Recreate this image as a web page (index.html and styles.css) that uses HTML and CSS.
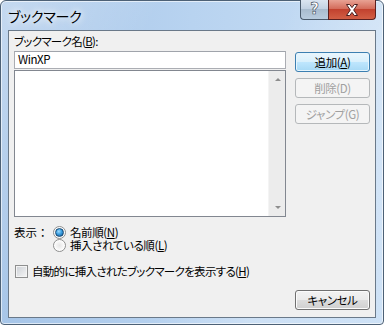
FILE: index.html
```html
<!DOCTYPE html>
<html lang="ja">
  <head>
    <meta charset="UTF-8" />
    <title>ブックマーク</title>
    <link rel="stylesheet" href="styles.css">
  </head>
  <body>
    <div class="window">
      <div class="titlebar">
        <span class="title">ブックマーク</span>
        <div class="caption-buttons">
          <div class="cap-btn help"><span>?</span></div>
          <div class="cap-btn close">
            <svg width="16" height="14" viewBox="0 0 16 14">
              <path d="M2.5 1.5h3.2L8 4.6l2.3-3.1h3.2L9.7 7l3.8 5.5h-3.2L8 9.4l-2.3 3.1H2.5L6.3 7z" fill="#fff" stroke="#4a1e1e" stroke-width="1" stroke-linejoin="round" />
            </svg>
          </div>
        </div>
      </div>
      <div class="client">
        <div class="top">
          <div class="left">
            <label class="label">ブックマーク名(<u>B</u>):</label>
            <div class="textbox">WinXP</div>
            <div class="listbox">
              <div class="scrollbar">
                <span class="arrow up"></span>
                <span class="arrow down"></span>
              </div>
            </div>
          </div>
          <div class="buttons">
            <button class="btn default">追加(<u>A</u>)</button>
            <button class="btn" disabled>削除(D)</button>
            <button class="btn" disabled>ジャンプ(G)</button>
          </div>
        </div>
        <div class="display">
          <span class="display-label">表示：</span>
          <div class="option"><span class="radio checked"></span><span>名前順(<u>N</u>)</span></div>
          <div class="option"><span class="radio"></span><span>挿入されている順(<u>L</u>)</span></div>
        </div>
        <div class="check-row"><span class="checkbox"></span><span>自動的に挿入されたブックマークを表示する(<u>H</u>)</span></div>
        <div class="footer">
          <button class="btn">キャンセル</button>
        </div>
      </div>
    </div>
  </body>
</html>
```

FILE: styles.css
```css
* {
  box-sizing: border-box;
}

body {
  margin: 0;
  width: 384px;
  height: 325px;
  overflow: hidden;
  font-family: "Noto Sans CJK JP", "Noto Sans", sans-serif;
  font-size: 11.5px;
  letter-spacing: -0.4px;
  font-feature-settings: "palt";
  color: #000;
}

.window {
  width: 384px;
  height: 325px;
  border: 1px solid #4d6176;
  border-radius: 6px 6px 4px 4px;
  padding: 0 7px 6px 7px;
  display: flex;
  flex-direction: column;
  background:
    linear-gradient(115deg, rgba(255, 255, 255, 0.35) 0%, rgba(255, 255, 255, 0) 30%, rgba(255, 255, 255, 0) 55%, rgba(255, 255, 255, 0.25) 75%, rgba(255, 255, 255, 0.1) 100%),
    linear-gradient(to right, #a6c5e8, #b8d3f0 50%, #c8def5);
  box-shadow: inset 0 0 0 1px rgba(255, 255, 255, 0.6);
}

.titlebar {
  height: 29px;
  display: flex;
  justify-content: space-between;
}

.title {
  align-self: center;
  padding-top: 1px;
  font-size: 14px;
  letter-spacing: -0.2px;
  text-shadow: 0 0 6px #fff, 0 0 10px #fff;
}

.caption-buttons {
  display: flex;
  height: 20px;
  margin-top: -1px;
}

.cap-btn {
  display: flex;
  align-items: center;
  justify-content: center;
  border: 1px solid #4a5a6c;
  border-top: none;
}

.help {
  width: 28px;
  border-radius: 0 0 0 4px;
  border-right: none;
  background: linear-gradient(#dbe5f1, #c3d2e3 45%, #a9bccf 50%, #b9ccdf);
}

.help span {
  font-family: "DejaVu Sans", sans-serif;
  font-weight: bold;
  font-size: 15px;
  line-height: 15px;
  letter-spacing: 0;
  color: #fff;
  -webkit-text-stroke: 0.6px #3a4654;
}

.close {
  width: 48px;
  border-radius: 0 0 4px 0;
  border-color: #5a2020;
  background: linear-gradient(#e8a294, #d46d5c 45%, #c2422f 50%, #d25f45);
}

.client {
  flex: 1;
  border: 1px solid #6a7989;
  background: #f0f0f0;
  display: flex;
  flex-direction: column;
  padding: 0 5px;
}

.top {
  display: flex;
  gap: 9px;
}

.left {
  width: 272px;
  display: flex;
  flex-direction: column;
}

.label {
  height: 16px;
  line-height: 16px;
  margin-top: 2px;
  margin-bottom: 2px;
  letter-spacing: -0.7px;
}

.textbox {
  height: 18px;
  border: 1px solid #abadb3;
  border-top-color: #a0a4ab;
  background: #fff;
  padding-left: 3px;
  line-height: 15px;
  margin-bottom: 1px;
}

.listbox {
  height: 147px;
  border: 1px solid #828790;
  background: #fff;
  display: flex;
  justify-content: flex-end;
}

.scrollbar {
  width: 17px;
  background: #ececec;
  border-left: 1px solid #f4f4f4;
  display: flex;
  flex-direction: column;
  justify-content: space-between;
  align-items: center;
  padding: 7px 0 7px 1px;
}

.arrow {
  width: 0;
  height: 0;
  border-left: 3px solid transparent;
  border-right: 3px solid transparent;
}

.arrow.up {
  border-bottom: 3px solid #8d8d8d;
}

.arrow.down {
  border-top: 3px solid #8d8d8d;
}

.buttons {
  width: 75px;
  padding-top: 21px;
  display: flex;
  flex-direction: column;
  gap: 6px;
}

.btn {
  height: 20px;
  width: 75px;
  padding: 0;
  font: inherit;
  letter-spacing: inherit;
  font-feature-settings: inherit;
  color: #000;
  border: 1px solid #707070;
  border-radius: 3px;
  background: linear-gradient(#f2f2f2, #ebebeb 48%, #dddddd 52%, #cfcfcf);
  box-shadow: inset 0 0 0 1px #fbfbfb;
}

.btn.default {
  border-color: #3c7fb1;
  background: linear-gradient(#eaf6fd, #d9f0fc 48%, #bee6fd 52%, #a7d9f5);
  box-shadow: inset 0 0 0 1px #e6f5fd;
}

.btn:disabled {
  color: #a0a0a0;
  border-color: #b5b8ba;
  background: #f4f4f4;
  box-shadow: none;
}

.display {
  margin-top: 9px;
  display: grid;
  grid-template-columns: 39px auto;
  grid-auto-rows: 13px;
  justify-content: start;
  align-items: center;
  line-height: 13px;
}

.display-label {
  grid-row: 1;
  font-feature-settings: normal;
  letter-spacing: 0;
}

.option {
  grid-column: 2;
  display: flex;
  align-items: center;
  gap: 4px;
}

.radio {
  width: 13px;
  height: 13px;
  border-radius: 50%;
  border: 1px solid #8e8f8f;
  background: radial-gradient(circle at 50% 50%, #e6e6e6 0, #f4f4f4 40%, #fff 70%);
  display: flex;
  align-items: center;
  justify-content: center;
}

.radio.checked::after {
  content: "";
  width: 7px;
  height: 7px;
  border-radius: 50%;
  border: 1px solid #184a74;
  background: radial-gradient(circle at 40% 35%, #9edcff 0, #3a9ee0 45%, #10508c 100%);
}

.check-row {
  margin-top: 13px;
  margin-left: 1px;
  height: 13px;
  display: flex;
  align-items: center;
  gap: 4px;
  line-height: 13px;
  letter-spacing: -0.7px;
}

.checkbox {
  width: 13px;
  height: 13px;
  border: 1px solid #8e8f8f;
  background: linear-gradient(135deg, #cbcfd5, #f6f6f6);
  box-shadow: inset 0 0 0 1px #f4f4f4;
}

.footer {
  margin-top: 12px;
  display: flex;
  justify-content: flex-end;
}

u {
  text-decoration-thickness: 1px;
  text-underline-offset: 1px;
}
```
